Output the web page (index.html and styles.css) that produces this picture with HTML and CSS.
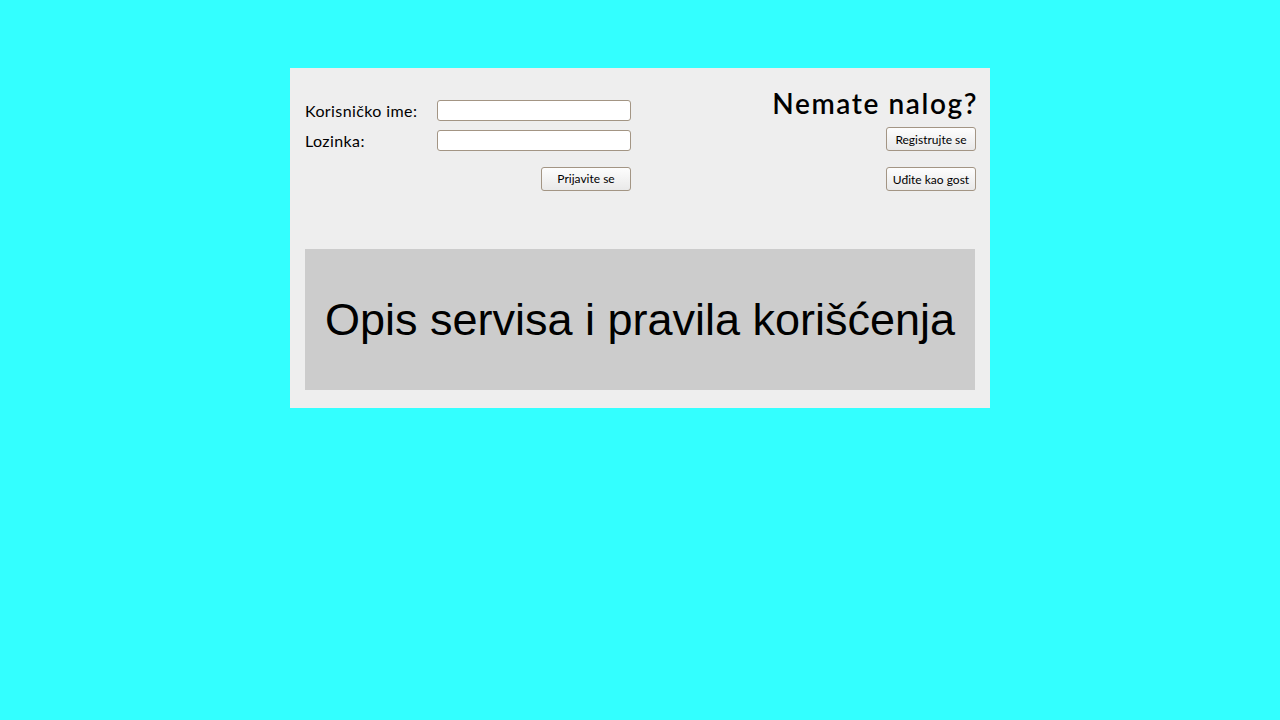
FILE: index.html
```html
<!DOCTYPE html>
<html lang="sr">
<head>
<meta charset="utf-8">
<title>Prijava</title>
<link rel="stylesheet" href="styles.css">
</head>
<body>
<div class="panel">
  <div class="top">
    <form class="login">
      <label class="label" for="user">Korisničko ime:</label>
      <input class="field" id="user" type="text">
      <label class="label" for="pass">Lozinka:</label>
      <input class="field" id="pass" type="password">
      <div class="actions"><button class="btn" type="button">Prijavite se</button></div>
    </form>
    <div class="signup">
      <h2 class="title">Nemate nalog?</h2>
      <button class="btn" type="button">Registrujte se</button>
      <button class="btn guest" type="button">Uđite kao gost</button>
    </div>
  </div>
  <div class="about">Opis servisa i pravila korišćenja</div>
</div>
</body>
</html>
```
FILE: styles.css
```css
html, body {
  margin: 0;
  padding: 0;
}
body {
  background: #33ffff;
  font-family: "Lato", "Noto Sans", sans-serif;
  color: #000;
}
.panel {
  width: 670px;
  margin: 68px auto 0;
  padding: 15px 15px 18px;
  background: #eeeeee;
}
.top {
  display: flex;
  justify-content: space-between;
  height: 166px;
}
.login {
  display: grid;
  grid-template-columns: 132px 194px;
  grid-auto-rows: 21px;
  row-gap: 9px;
  align-items: center;
  padding-top: 17px;
  margin: 0;
  align-content: start;
}
.label {
  font-size: 16px;
  line-height: 21px;
  letter-spacing: 0.4px;
}
.field {
  box-sizing: border-box;
  width: 194px;
  height: 21px;
  margin: 0;
  border: 1px solid #a39584;
  border-radius: 3px;
  background: #fff;
  padding: 1px 4px;
}
.actions {
  grid-column: 1 / 3;
  display: flex;
  justify-content: flex-end;
  margin-top: 16px;
  height: 24px;
}
.btn {
  box-sizing: border-box;
  width: 90px;
  height: 24px;
  margin: 0;
  padding: 0;
  border: 1px solid #a39584;
  border-radius: 3px;
  background: linear-gradient(#fdfdfd, #e9e9e9);
  font-family: "Lato", "Noto Sans", sans-serif;
  font-size: 12px;
  color: #000;
}
.signup {
  display: flex;
  flex-direction: column;
  align-items: flex-end;
  margin-right: -1px;
}
.title {
  margin: 3px -2px 0 0;
  font-size: 28px;
  font-weight: 600;
  line-height: 34px;
  letter-spacing: 1.6px;
}
.signup .btn {
  margin-top: 7px;
}
.signup .guest {
  margin-top: 16px;
}
.about {
  height: 141px;
  display: flex;
  align-items: center;
  justify-content: center;
  background: #cccccc;
  font-family: "Liberation Sans", Arial, sans-serif;
  font-size: 45px;
}
```
